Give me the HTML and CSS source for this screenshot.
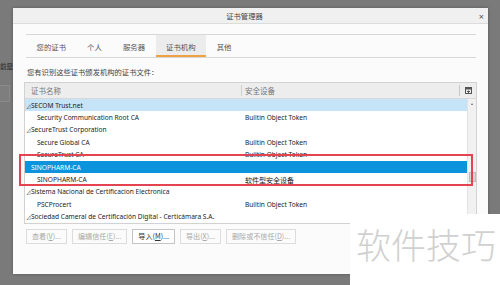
FILE: index.html
```html
<!DOCTYPE html>
<html lang="zh-CN">
<head>
    <meta charset="UTF-8">
    <title>证书管理器</title>
    <link rel="stylesheet" href="styles.css">
</head>
<body>
    <div class="page">
        <div class="behind">
            <div class="behind-text">前是</div>
            <div class="behind-box"></div>
        </div>

        <div class="dialog">
            <div class="titlebar">
                <span class="title">证书管理器</span>
                <span class="close">×</span>
            </div>

            <div class="content">
                <div class="tabs">
                    <div class="tab">您的证书</div>
                    <div class="tab">个人</div>
                    <div class="tab">服务器</div>
                    <div class="tab active">证书机构</div>
                    <div class="tab">其他</div>
                </div>

                <p class="desc">您有识别这些证书颁发机构的证书文件：</p>

                <div class="tree">
                    <div class="tree-head">
                        <div class="col-name">证书名称</div>
                        <div class="col-device">安全设备</div>
                        <div class="col-picker">
                            <svg width="7" height="7" viewBox="0 0 7 7">
                                <rect x="0.5" y="0.5" width="6" height="6" fill="none" stroke="#555" stroke-width="1"/>
                                <rect x="0.5" y="0.5" width="6" height="2" fill="#555"/>
                                <path d="M2 4.5 L5 4.5 M3.5 3.5 L3.5 6" stroke="#555" stroke-width="1"/>
                            </svg>
                        </div>
                    </div>
                    <div class="tree-body">
                        <div class="rows">
                            <div class="row parent hover"><span class="twisty">⊿</span>SECOM Trust.net</div>
                            <div class="row"><div class="col-name child">Security Communication Root CA</div><div class="col-device">Builtin Object Token</div></div>
                            <div class="row parent"><span class="twisty">⊿</span>SecureTrust Corporation</div>
                            <div class="row"><div class="col-name child">Secure Global CA</div><div class="col-device">Builtin Object Token</div></div>
                            <div class="row"><div class="col-name child">SecureTrust CA</div><div class="col-device">Builtin Object Token</div></div>
                            <div class="row parent selected">SINOPHARM-CA</div>
                            <div class="row"><div class="col-name child">SINOPHARM-CA</div><div class="col-device cjk">软件型安全设备</div></div>
                            <div class="row parent"><span class="twisty">⊿</span>Sistema Nacional de Certificacion Electronica</div>
                            <div class="row"><div class="col-name child">PSCProcert</div><div class="col-device">Builtin Object Token</div></div>
                            <div class="row parent"><span class="twisty">⊿</span>Sociedad Cameral de Certificación Digital - Certicámara S.A.</div>
                        </div>
                        <div class="scrollbar">
                            <div class="arrow"></div>
                            <div class="thumb"></div>
                        </div>
                    </div>
                </div>

                <div class="buttons">
                    <div class="btn">查看(<u>V</u>)...</div>
                    <div class="btn">编辑信任(<u>E</u>)...</div>
                    <div class="btn enabled">导入(<u>M</u>)...</div>
                    <div class="btn">导出(<u>X</u>)...</div>
                    <div class="btn">删除或不信任(<u>D</u>)...</div>
                </div>
            </div>
        </div>
    </div>

    <div class="highlight"></div>
    <div class="watermark">软件技巧</div>
</body>
</html>
```

FILE: styles.css
```css
body {
    margin: 0;
    width: 500px;
    height: 285px;
    overflow: hidden;
    background-color: #7a7a7a;
    font-family: "Noto Sans", "Noto Sans CJK SC", sans-serif;
    font-size: 7.5px;
    color: #333;
    position: relative;
}
.page {
    display: flex;
    padding-top: 8px;
}
.behind {
    width: 13px;
    flex: none;
    overflow: hidden;
}
.behind-text {
    margin-top: 53px;
    font-family: "Noto Sans CJK SC", sans-serif;
    font-size: 6.5px;
    color: #1e1e1e;
    white-space: nowrap;
}
.behind-box {
    margin-top: 14px;
    width: 9px;
    height: 15px;
    border: 1px solid #8a8a8a;
    border-left: none;
    background-color: #7e7e7e;
}
.dialog {
    width: 475px;
    height: 266px;
    background-color: #fbfbfb;
    box-shadow: 0 0 3px rgba(0, 0, 0, 0.3);
}
.titlebar {
    height: 15px;
    background-color: #f0f0f0;
    border-bottom: 1px solid #dcdcdc;
    display: flex;
    align-items: center;
    justify-content: center;
    position: relative;
}
.title {
    font-family: "Noto Sans CJK SC", sans-serif;
    font-size: 7.3px;
    color: #444;
    margin-left: -12px;
}
.close {
    position: absolute;
    right: 4px;
    top: 2px;
    font-size: 9px;
    color: #555;
}
.content {
    padding: 0 11px;
}
.tabs {
    display: flex;
    margin: 10px 1px 0 2px;
    border-top: 1px solid #d8d8d8;
    border-bottom: 1px solid #d8d8d8;
    height: 22px;
}
.tab {
    padding: 0 10.5px;
    display: flex;
    align-items: center;
    font-family: "Noto Sans CJK SC", sans-serif;
    font-size: 7.4px;
    color: #555;
    box-sizing: border-box;
}
.tab.active {
    background-color: #ececec;
    border-bottom: 2.5px solid #eea241;
    padding-top: 2px;
}
.desc {
    margin: 9px 0 0 3px;
    height: 15px;
    font-family: "Noto Sans CJK SC", sans-serif;
    font-size: 7.3px;
    color: #444;
}
.tree {
    border: 1px solid #d2d2d2;
    background-color: #fff;
}
.tree-head {
    display: flex;
    height: 15px;
    align-items: center;
    background-color: #ededed;
    border-bottom: 1px solid #d8d8d8;
    color: #777;
    font-family: "Noto Sans CJK SC", sans-serif;
}
.col-name {
    width: 210px;
    padding-left: 6px;
    flex: none;
    white-space: nowrap;
}
.tree-head .col-device {
    border-left: 1px solid #d0d0d0;
    padding-left: 3px;
    flex: 1;
}
.col-picker {
    width: 16px;
    height: 11px;
    border-left: 1px solid #c8c8c8;
    display: flex;
    align-items: center;
    justify-content: center;
}
.tree-body {
    display: flex;
}
.rows {
    flex: 1;
}
.row {
    height: 12.4px;
    display: flex;
    align-items: center;
    white-space: nowrap;
    color: #222;
    font-size: 6.6px;
}
.row .col-device {
    padding-left: 4px;
}
.row .cjk {
    font-family: "Noto Sans CJK SC", sans-serif;
    font-size: 7px;
}
.child {
    padding-left: 12px;
    width: 204px;
}
.parent {
    padding-left: 1px;
}
.parent.selected {
    padding-left: 6px;
    background-color: #0b94dc;
    color: #fff;
}
.hover {
    background-color: #c6e4f7;
}
.twisty {
    font-size: 5px;
    width: 5px;
    color: #555;
}
.scrollbar {
    width: 8px;
    background-color: #f1f1f1;
    border-left: 1px solid #e2e2e2;
}
.arrow {
    margin: 4px auto 0;
    width: 0;
    height: 0;
    border-left: 1.5px solid transparent;
    border-right: 1.5px solid transparent;
    border-bottom: 2px solid #666;
}
.thumb {
    margin: 67px 0 0 1px;
    width: 5px;
    height: 8px;
    background-color: #d6d6d6;
    border: 1px solid #bdbdbd;
}
.buttons {
    display: flex;
    gap: 5px;
    margin: 5px 0 0 2px;
}
.btn {
    height: 15px;
    box-sizing: border-box;
    padding: 0 5px;
    display: flex;
    align-items: center;
    border: 1px solid #dcdcdc;
    background-color: #fbfbfb;
    color: #a9a9a9;
    font-family: "Noto Sans CJK SC", sans-serif;
    font-size: 7.1px;
}
.btn.enabled {
    color: #333;
    border-color: #c4c4c4;
    background-color: #fff;
}
.highlight {
    position: absolute;
    left: 19px;
    top: 154px;
    width: 450px;
    height: 28px;
    border: 2px solid #e4434f;
}
.watermark {
    position: absolute;
    left: 350px;
    top: 214px;
    width: 150px;
    height: 71px;
    background-color: #fff;
    font-family: "Noto Sans CJK SC", sans-serif;
    font-size: 35px;
    font-weight: 300;
    color: #d0d0d0;
    padding-left: 6px;
    box-sizing: border-box;
    line-height: 60px;
}
```
